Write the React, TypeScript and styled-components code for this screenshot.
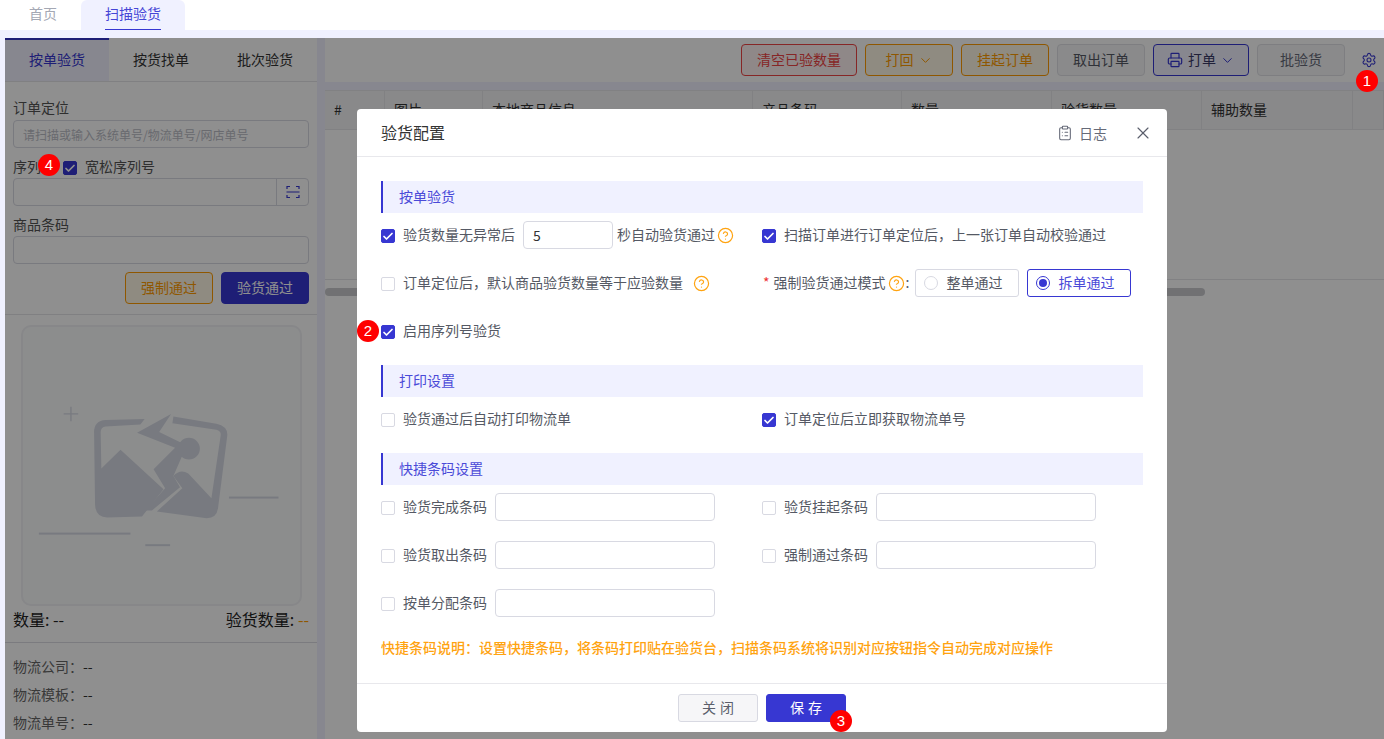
import React from "react";
import styled, { createGlobalStyle } from "styled-components";
import { Check, ChevronDown, CircleHelp, ClipboardList, Printer, Settings, X } from "lucide-react";

const GlobalStyle = createGlobalStyle`
  html, body {
    margin: 0;
    height: 739px;
    overflow: hidden;
    background: #f0f1ff;
    font-family: "Noto Sans CJK SC", "Noto Sans", sans-serif;
    font-size: 14px;
    color: #333;
  }
  * { box-sizing: border-box; }
`;

const primary = "#3737d2";
const orange = "#ffa310";
const buttonOrange = "#ff9c00";
const buttonTint = "#fff8e6";

const Page = styled.div`
  position: relative;
  width: 1384px;
  height: 739px;
  overflow: hidden;
`;

const TopBar = styled.div`
  height: 30px;
  background: #fff;
  display: flex;
  padding-left: 5px;
`;

const TopTab = styled.div<{ $active?: boolean }>`
  padding: 0 24px;
  background: ${(p) => (p.$active ? "#f0f1ff" : "transparent")};
  border-radius: 6px 6px 0 0;
  color: ${(p) => (p.$active ? "#4646d6" : "#a4a8b4")};
`;

const TopTabLabel = styled.div<{ $active?: boolean }>`
  height: 30px;
  line-height: 26px;
  border-bottom: 1px solid ${(p) => (p.$active ? primary : "transparent")};
`;

const Workspace = styled.div`
  display: flex;
  gap: 8px;
  height: 709px;
  padding: 8px 0 0 5px;
`;

const LeftPanel = styled.div`
  width: 312px;
  flex: none;
  background: #fff;
`;

const ScanTabs = styled.div`
  display: grid;
  grid-template-columns: repeat(3, 104px);
  height: 44px;
  border-bottom: 1px solid #e4e4e8;
`;

const ScanTab = styled.div<{ $active?: boolean }>`
  display: flex;
  align-items: center;
  justify-content: center;
  background: ${(p) => (p.$active ? "#f0f1ff" : "transparent")};
  border-top: 2px solid ${(p) => (p.$active ? primary : "transparent")};
  color: ${(p) => (p.$active ? primary : "#333")};
  padding-bottom: 4px;
`;

const ScanForm = styled.div`
  padding: 16px 8px 10px;
  border-bottom: 1px solid #e4e4e8;
`;

const FieldLabel = styled.div`
  height: 20px;
  line-height: 18px;
  color: #555;
  margin-bottom: 2px;
`;

const SerialLabel = styled.div`
  display: flex;
  align-items: center;
  gap: 8px;
  height: 20px;
  margin: 9px 0 1px;
  padding-bottom: 2px;
  color: #555;
`;

const SerialText = styled.span`
  width: 42px;
`;

const TextBox = styled.input<{ $width?: number }>`
  display: block;
  flex: none;
  width: ${(p) => (p.$width ? `${p.$width}px` : "100%")};
  height: 28px;
  border: 1px solid #d8d9e2;
  border-radius: 4px;
  padding: 0 9px;
  background: #fff;
  font: inherit;
  font-size: 14px;
  color: #333;
  outline: none;

  &::placeholder {
    color: #bbbdc6;
    font-size: 12px;
  }
`;

const ScanInput = styled.div`
  display: flex;
  height: 28px;
  border: 1px solid #d8d9e2;
  border-radius: 4px;
`;

const ScanSuffix = styled.div`
  margin-left: auto;
  width: 32px;
  border-left: 1px solid #d8d9e2;
  display: flex;
  align-items: center;
  justify-content: center;
`;

const ActionRow = styled.div`
  display: flex;
  justify-content: flex-end;
  gap: 8px;
  margin-top: 8px;
`;

const SolidButton = styled.button`
  width: 88px;
  height: 32px;
  padding: 0 0 2px;
  border: 1px solid ${primary};
  border-radius: 4px;
  background: ${primary};
  color: #fff;
  font: inherit;
`;

const OutlineButton = styled.button<{ $tone: string; $line?: string; $bg: string }>`
  display: flex;
  flex: none;
  align-items: center;
  justify-content: center;
  height: 32px;
  padding: 0 0 2px;
  border: 1px solid ${(p) => p.$line || p.$tone};
  border-radius: 4px;
  background: ${(p) => p.$bg};
  color: ${(p) => p.$tone};
  font: inherit;

  svg {
    margin-top: 2px;
  }
`;

const ForceButton = styled(OutlineButton)`
  width: 88px;
`;

const PreviewBox = styled.div`
  width: 281px;
  height: 281px;
  margin: 10px 0 0 16px;
  border: 2px solid #f0f1f4;
  border-radius: 10px;
  background: #fafbfc;
`;

const CountRow = styled.div`
  display: flex;
  justify-content: space-between;
  padding: 3px 8px 0;
  height: 37px;
  line-height: 20px;
  font-size: 16px;
  color: #222;
  border-bottom: 1px solid #dcdce2;
`;

const CountValue = styled.span<{ $tone?: string }>`
  color: ${(p) => p.$tone || "#222"};
`;

const InfoList = styled.div`
  display: grid;
  gap: 8px;
  padding: 14px 8px 0;
`;

const InfoRow = styled.div`
  height: 20px;
  line-height: 18px;
  color: #666;
`;

const InfoValue = styled.span`
  color: #333;
`;

const RightPanel = styled.div`
  flex: 1;
  min-width: 0;
  display: flex;
  flex-direction: column;
  gap: 8px;
`;

const Toolbar = styled.div`
  height: 44px;
  background: #fff;
  display: flex;
  align-items: center;
  padding: 0 0 0 416px;
  gap: 8px;
`;

const ToolButton = styled(OutlineButton)<{ $width: number }>`
  width: ${(p) => p.$width}px;
`;

const ButtonIcon = styled.span<{ $side: "left" | "right" }>`
  display: flex;
  margin-${(p) => p.$side}: ${(p) => (p.$side === "left" ? 4 : 5)}px;
`;

const PrintText = styled.span`
  color: #3a3a66;
`;

const GearWrap = styled.div`
  display: flex;
  margin-left: 8px;
  color: ${primary};
`;

const TableArea = styled.div`
  flex: 1;
  background: #fff;
`;

const TableHead = styled.div`
  display: grid;
  grid-template-columns: 60px 98px 270px 149px 150px 150px 151px 1fr;
  height: 40px;
  background: #f4f5f7;
  border: 1px solid #e6e6ea;
  border-width: 1px 0;
`;

const HeadCell = styled.div`
  padding-left: 9px;
  line-height: 36px;
  color: #333;
  border-right: 1px solid #e6e6ea;
`;

const TableBody = styled.div`
  height: 150px;
  border-bottom: 1px solid #e6e6ea;
`;

const ScrollBar = styled.div`
  width: 880px;
  height: 8px;
  margin-top: 8px;
  border-radius: 4px;
  background: #c9cace;
`;

const Overlay = styled.div`
  position: absolute;
  left: 5px;
  top: 38px;
  right: 0;
  bottom: 0;
  background: rgba(0, 0, 0, 0.44);
`;

const Modal = styled.div`
  position: absolute;
  left: 357px;
  top: 109px;
  width: 810px;
  height: 623px;
  background: #fff;
  border-radius: 4px;
  display: flex;
  flex-direction: column;
`;

const ModalHeader = styled.div`
  height: 48px;
  flex: none;
  display: flex;
  align-items: center;
  padding: 0 14px 0 24px;
  border-bottom: 1px solid #e8e8ec;
`;

const ModalTitle = styled.div`
  font-size: 16px;
  padding-bottom: 2px;
  color: #333;
`;

const LogLink = styled.div`
  display: flex;
  align-items: center;
  gap: 6px;
  margin-left: auto;
  color: #666a78;
  line-height: 18px;
`;

const CloseIcon = styled.div`
  display: flex;
  margin-left: 26px;
  color: #5b5f6c;
`;

const ModalBody = styled.div`
  flex: 1;
  padding: 24px 24px 0;
`;

const SectionTitle = styled.div`
  height: 32px;
  line-height: 30px;
  padding-left: 16px;
  background: #f0f1ff;
  border-left: 2px solid ${primary};
  color: #4a4ad8;
`;

const Rows = styled.div`
  display: grid;
  gap: 20px;
  padding: 8px 0 20px;
`;

const BarcodeRows = styled(Rows)`
  padding-bottom: 0;
`;

const Row = styled.div`
  display: grid;
  grid-template-columns: 381px 1fr;
  grid-template-rows: 28px;
  height: 28px;
`;

const Cell = styled.div`
  display: flex;
  align-items: center;
  height: 28px;
  padding-bottom: 2px;
  color: #555964;
  white-space: nowrap;

  input {
    margin-top: 2px;
  }
`;

const CheckBox = styled.span<{ $checked?: boolean }>`
  flex: none;
  width: 14px;
  height: 14px;
  margin: 4px 8px 0 0;
  border-radius: 2px;
  border: 1px solid ${(p) => (p.$checked ? primary : "#d8d9e2")};
  background: ${(p) => (p.$checked ? primary : "#fff")};
  color: #fff;
  display: flex;
  align-items: center;
  justify-content: center;
`;

const SerialCheck = styled(CheckBox)`
  margin-right: 0;
`;

const SecondsInput = styled(TextBox)`
  margin: 2px 4px 0 8px;
`;

const Hint = styled.span<{ $gap: number }>`
  display: flex;
  margin: 2px 0 0 ${(p) => p.$gap}px;
  color: ${orange};
`;

const ModeColon = styled.span`
  margin-left: 1px;
`;

const Required = styled.span`
  color: #e33;
  margin: 0 4px 0 1px;
`;

const RadioCard = styled.div<{ $active?: boolean }>`
  display: flex;
  flex: none;
  align-items: center;
  width: 104px;
  height: 28px;
  padding: 0 0 2px 8px;
  margin: 2px 8px 0 0;
  border: 1px solid ${(p) => (p.$active ? primary : "#d8d9e2")};
  border-radius: 3px;
  color: ${(p) => (p.$active ? "#4a4ad8" : "#555964")};
`;

const RadioDot = styled.span<{ $active?: boolean }>`
  width: 14px;
  height: 14px;
  margin: 2px 8px 0 0;
  border-radius: 50%;
  border: 1px solid ${(p) => (p.$active ? primary : "#d8d9e2")};
  display: flex;
  align-items: center;
  justify-content: center;

  &::after {
    content: "";
    width: 8px;
    height: 8px;
    border-radius: 50%;
    background: ${(p) => (p.$active ? primary : "transparent")};
  }
`;

const ModeLabel = styled.span`
  display: flex;
  align-items: center;
  margin-right: 6px;
`;

const BarcodeName = styled.span`
  width: 92px;
`;

const Note = styled.div`
  margin-top: 20px;
  height: 20px;
  line-height: 20px;
  color: ${orange};
  font-weight: 500;
`;

const ModalFooter = styled.div`
  height: 49px;
  flex: none;
  display: flex;
  justify-content: center;
  gap: 8px;
  padding-top: 10px;
  border-top: 1px solid #e8e8ec;
`;

const FooterButton = styled.button<{ $primary?: boolean }>`
  width: 80px;
  height: 28px;
  padding: 0 0 2px 4px;
  border-radius: 3px;
  border: 1px solid ${(p) => (p.$primary ? primary : "#d8d9e2")};
  background: ${(p) => (p.$primary ? primary : "#f6f6f8")};
  color: ${(p) => (p.$primary ? "#fff" : "#5b5f6c")};
  font: inherit;
  letter-spacing: 4px;
`;

const Badge = styled.div<{ $left: number; $top: number }>`
  position: absolute;
  left: ${(p) => p.$left}px;
  top: ${(p) => p.$top}px;
  width: 22px;
  height: 22px;
  border-radius: 50%;
  background: #f00;
  color: #fff;
  font-family: "Liberation Sans", sans-serif;
  font-size: 15px;
  line-height: 22px;
  text-align: center;
`;

const columns = ["#", "图片", "本地商品信息", "产品条码", "数量", "验货数量", "辅助数量", ""];

const Tick = ({ checked }: { checked?: boolean }) => (
  <CheckBox $checked={checked}>{checked && <Check size={13} strokeWidth={3.5} />}</CheckBox>
);

const Help = ({ gap }: { gap: number }) => (
  <Hint $gap={gap}>
    <CircleHelp size={17} strokeWidth={1.7} />
  </Hint>
);

const ScanIcon = () => (
  <svg width="14" height="14" viewBox="0 0 14 14" fill="none" stroke={primary} strokeWidth="1.2">
    <path d="M1 4V1.5h3M10 1.5h3V4M1 10v2.500h3M10 12.500h3V10M0.500 7h13" />
  </svg>
);

const Chevron = () => (
  <ButtonIcon $side="left">
    <ChevronDown size={15} strokeWidth={1.6} />
  </ButtonIcon>
);

const BrokenImage = () => (
  <svg width="277" height="277" viewBox="65 17 838 838" fill="#d6dae4">
    <path d="M433 295 315 298Q280 300 280 335L283 555Q285 593 320 593L425 590 490 508 360 388 302 445 300 335Q300 320 315 318L420 312Z" />
    <path d="M513 280 410 337 525 382 460 447 495 505 435 572 455 572 540 502 520 468 545 410 570 380 477 335Z" />
    <circle cx="567" cy="385" r="33" />
    <path d="M520 288 650 310Q685 318 683 345L655 565Q650 598 615 595L470 575 547 505 520 468Q540 445 565 460L635 535 663 345Q665 332 650 328L517 308Z" />
    <path d="M208 258h4v20h20v4h-20v20h-4v-20h-20v-4h20Z" />
    <rect x="688" y="530" width="150" height="6" />
    <rect x="113" y="639" width="277" height="6" />
    <rect x="435" y="674" width="75" height="6" />
  </svg>
);

const BarcodeCell = ({ name }: { name: string }) => (
  <Cell>
    <Tick />
    <BarcodeName>{name}</BarcodeName>
    <TextBox $width={220} />
  </Cell>
);

export default function App() {
  return (
    <Page>
      <GlobalStyle />
      <TopBar>
        <TopTab>
          <TopTabLabel>首页</TopTabLabel>
        </TopTab>
        <TopTab $active>
          <TopTabLabel $active>扫描验货</TopTabLabel>
        </TopTab>
      </TopBar>

      <Workspace>
        <LeftPanel>
          <ScanTabs>
            <ScanTab $active>按单验货</ScanTab>
            <ScanTab>按货找单</ScanTab>
            <ScanTab>批次验货</ScanTab>
          </ScanTabs>
          <ScanForm>
            <FieldLabel>订单定位</FieldLabel>
            <TextBox placeholder="请扫描或输入系统单号/物流单号/网店单号" />
            <SerialLabel>
              <SerialText>序列号</SerialText>
              <SerialCheck $checked>
                <Check size={13} strokeWidth={3.5} />
              </SerialCheck>
              宽松序列号
            </SerialLabel>
            <ScanInput>
              <ScanSuffix>
                <ScanIcon />
              </ScanSuffix>
            </ScanInput>
            <SerialLabel>商品条码</SerialLabel>
            <TextBox />
            <ActionRow>
              <ForceButton $tone={buttonOrange} $bg={buttonTint}>
                强制通过
              </ForceButton>
              <SolidButton>验货通过</SolidButton>
            </ActionRow>
          </ScanForm>
          <PreviewBox>
            <BrokenImage />
          </PreviewBox>
          <CountRow>
            <span>
              数量: <CountValue>--</CountValue>
            </span>
            <span>
              验货数量: <CountValue $tone={buttonOrange}>--</CountValue>
            </span>
          </CountRow>
          <InfoList>
            <InfoRow>
              物流公司：<InfoValue>--</InfoValue>
            </InfoRow>
            <InfoRow>
              物流模板：<InfoValue>--</InfoValue>
            </InfoRow>
            <InfoRow>
              物流单号：<InfoValue>--</InfoValue>
            </InfoRow>
          </InfoList>
        </LeftPanel>

        <RightPanel>
          <Toolbar>
            <ToolButton $width={116} $tone="#ef4444" $bg="#fff2f2">
              清空已验数量
            </ToolButton>
            <ToolButton $width={88} $tone={buttonOrange} $bg={buttonTint}>
              打回
              <Chevron />
            </ToolButton>
            <ToolButton $width={88} $tone={buttonOrange} $bg={buttonTint}>
              挂起订单
            </ToolButton>
            <ToolButton $width={88} $tone="#555964" $line="#e0e1e6" $bg="#f6f6f8">
              取出订单
            </ToolButton>
            <ToolButton $width={96} $tone={primary} $bg="#f0f1ff">
              <ButtonIcon $side="right">
                <Printer size={16} strokeWidth={1.8} />
              </ButtonIcon>
              <PrintText>打单</PrintText>
              <Chevron />
            </ToolButton>
            <ToolButton $width={88} $tone="#666a78" $line="#e0e1e6" $bg="#f6f6f8">
              批验货
            </ToolButton>
            <GearWrap>
              <Settings size={16} strokeWidth={1.6} />
            </GearWrap>
          </Toolbar>
          <TableArea>
            <TableHead>
              {columns.map((name, index) => (
                <HeadCell key={index}>{name}</HeadCell>
              ))}
            </TableHead>
            <TableBody />
            <ScrollBar />
          </TableArea>
        </RightPanel>
      </Workspace>

      <Overlay />

      <Modal>
        <ModalHeader>
          <ModalTitle>验货配置</ModalTitle>
          <LogLink>
            <ClipboardList size={16} strokeWidth={1.6} />
            日志
          </LogLink>
          <CloseIcon>
            <X size={20} strokeWidth={1.4} />
          </CloseIcon>
        </ModalHeader>
        <ModalBody>
          <SectionTitle>按单验货</SectionTitle>
          <Rows>
            <Row>
              <Cell>
                <Tick checked />
                验货数量无异常后
                <SecondsInput $width={90} defaultValue="5" />
                秒自动验货通过
                <Help gap={2} />
              </Cell>
              <Cell>
                <Tick checked />
                扫描订单进行订单定位后，上一张订单自动校验通过
              </Cell>
            </Row>
            <Row>
              <Cell>
                <Tick />
                订单定位后，默认商品验货数量等于应验数量
                <Help gap={10} />
              </Cell>
              <Cell>
                <ModeLabel>
                  <Required>*</Required>
                  强制验货通过模式
                  <Help gap={2} />
                  <ModeColon>:</ModeColon>
                </ModeLabel>
                <RadioCard>
                  <RadioDot />
                  整单通过
                </RadioCard>
                <RadioCard $active>
                  <RadioDot $active />
                  拆单通过
                </RadioCard>
              </Cell>
            </Row>
            <Row>
              <Cell>
                <Tick checked />
                启用序列号验货
              </Cell>
            </Row>
          </Rows>

          <SectionTitle>打印设置</SectionTitle>
          <Rows>
            <Row>
              <Cell>
                <Tick />
                验货通过后自动打印物流单
              </Cell>
              <Cell>
                <Tick checked />
                订单定位后立即获取物流单号
              </Cell>
            </Row>
          </Rows>

          <SectionTitle>快捷条码设置</SectionTitle>
          <BarcodeRows>
            <Row>
              <BarcodeCell name="验货完成条码" />
              <BarcodeCell name="验货挂起条码" />
            </Row>
            <Row>
              <BarcodeCell name="验货取出条码" />
              <BarcodeCell name="强制通过条码" />
            </Row>
            <Row>
              <BarcodeCell name="按单分配条码" />
            </Row>
          </BarcodeRows>
          <Note>快捷条码说明：设置快捷条码，将条码打印贴在验货台，扫描条码系统将识别对应按钮指令自动完成对应操作</Note>
        </ModalBody>
        <ModalFooter>
          <FooterButton>关闭</FooterButton>
          <FooterButton $primary>保存</FooterButton>
        </ModalFooter>
      </Modal>

      <Badge $left={1356} $top={70}>1</Badge>
      <Badge $left={357} $top={320}>2</Badge>
      <Badge $left={830} $top={710}>3</Badge>
      <Badge $left={38} $top={154}>4</Badge>
    </Page>
  );
}
